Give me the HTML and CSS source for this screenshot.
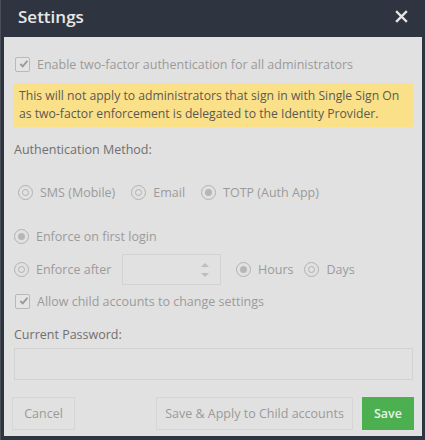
FILE: index.html
```
<!DOCTYPE html>
<html>
<head>
<meta charset="utf-8">
<link rel="stylesheet" href="styles.css">
</head>
<body>
<div class="modal">
  <div class="header">
    <span class="title">Settings</span>
    <span class="close">
      <svg width="13" height="13" viewBox="0 0 13 13"><path d="M2 2 L11 11 M11 2 L2 11" stroke="#e6e6e6" stroke-width="2.4" stroke-linecap="square"/></svg>
    </span>
  </div>
  <div class="body">
    <label class="check row-enable">
      <span class="cbox"><svg width="14" height="14" viewBox="0 0 14 14"><path d="M3 7 L6 10 L12 3" fill="none" stroke="#9a9a9a" stroke-width="2.4"/></svg></span>
      <span>Enable two-factor authentication for all administrators</span>
    </label>
    <div class="notice">This will not apply to administrators that sign in with Single Sign On as two-factor enforcement is delegated to the Identity Provider.</div>
    <div class="label auth-label">Authentication Method:</div>
    <div class="methods">
      <label class="radio"><span class="rad"></span>SMS (Mobile)</label>
      <label class="radio"><span class="rad"></span>Email</label>
      <label class="radio"><span class="rad on"></span>TOTP (Auth App)</label>
    </div>
    <label class="radio first"><span class="rad on"></span>Enforce on first login</label>
    <div class="after">
      <label class="radio"><span class="rad"></span>Enforce after</label>
      <div class="num">
        <svg width="10" height="18" viewBox="0 0 10 18"><path d="M1 6 L5 2 L9 6 Z M1 12 L5 16 L9 12 Z" fill="#bdbdbd"/></svg>
      </div>
      <label class="radio"><span class="rad on"></span>Hours</label>
      <label class="radio"><span class="rad"></span>Days</label>
    </div>
    <label class="check row-allow">
      <span class="cbox"><svg width="14" height="14" viewBox="0 0 14 14"><path d="M3 7 L6 10 L12 3" fill="none" stroke="#9a9a9a" stroke-width="2.4"/></svg></span>
      <span>Allow child accounts to change settings</span>
    </label>
    <div class="label pw-label">Current Password:</div>
    <div class="input"></div>
    <div class="footer">
      <button class="btn cancel">Cancel</button>
      <div class="spacer"></div>
      <button class="btn apply">Save &amp; Apply to Child accounts</button>
      <button class="btn save">Save</button>
    </div>
  </div>
</div>
</body>
</html>
```
FILE: styles.css
```
html, body {
  margin: 0;
  padding: 0;
  background: #2f3540;
}
body {
  width: 425px;
  height: 440px;
  overflow: hidden;
  font-family: "Open Sans", "Liberation Sans", sans-serif;
  font-size: 12.5px;
}
.modal {
  width: 425px;
  height: 440px;
  box-sizing: border-box;
  border-left: 1px solid #4a4f57;
  display: flex;
  flex-direction: column;
}
.header {
  height: 37px;
  display: flex;
  align-items: center;
  justify-content: space-between;
  padding: 0 17px 0 17px;
}
.title {
  color: #e8e8e8;
  font-size: 17px;
  font-weight: 600;
  margin-top: -4px;
}
.close {
  display: flex;
  margin-top: -5px;
}
.body {
  margin: 0 3px 0 3px;
  height: 399px;
  background: #e1e1e1;
  padding: 0 8px 0 10px;
  box-sizing: border-box;
  color: #9b9b9b;
  display: flex;
  flex-direction: column;
}
.check {
  display: flex;
  align-items: center;
  gap: 7px;
}
.cbox {
  width: 13px;
  height: 13px;
  border: 1px solid #b9b9b9;
  border-radius: 2px;
  background: #e4e4e4;
  display: flex;
  align-items: center;
  justify-content: center;
  margin-left: 1px;
}
.cbox svg { margin-left: 2px; margin-top: -1px; }
.row-enable { margin-top: 19px; }
.notice {
  margin-top: 10px;
  background: #fbe08a;
  color: #5a5a52;
  padding: 4px 4px 4px 5px;
  line-height: 18px;
  font-size: 12.2px;
  width: 399px;
  box-sizing: border-box;
}
.label { color: #707070; }
.auth-label { margin-top: 14px; }
.methods {
  display: flex;
  gap: 16px;
  margin-top: 26px;
  padding-left: 4px;
}
.radio {
  display: flex;
  align-items: center;
  gap: 7px;
}
.rad {
  width: 13px;
  height: 13px;
  border: 1.4px solid #b2b2b2;
  border-radius: 50%;
  display: flex;
  align-items: center;
  justify-content: center;
  box-sizing: content-box;
}
.rad::after {
  content: "";
  width: 5px;
  height: 5px;
  border-radius: 50%;
  border: 1.4px solid #b2b2b2;
}
.rad.on::after {
  width: 7px;
  height: 7px;
  border: none;
  background: #b6b6b6;
}
.first { margin-top: 27px; }
.after {
  display: flex;
  align-items: center;
  margin-top: 9px;
}
.after .radio:first-child { width: 108px; }
.num {
  width: 99px;
  height: 31px;
  border: 1px solid #d2d2d2;
  display: flex;
  align-items: center;
  justify-content: flex-end;
  padding-right: 10px;
  box-sizing: border-box;
  margin-right: 15px;
}
.after .num + .radio { margin-right: 11px; }
.row-allow { margin-top: 8px; }
.pw-label { margin-top: 16px; }
.input {
  margin-top: 5px;
  width: 399px;
  height: 32px;
  border: 1px solid #d2d2d2;
  box-sizing: border-box;
}
.footer {
  display: flex;
  margin-top: 17px;
  margin-left: -2px;
  align-items: center;
}
.spacer { flex: 1; }
.btn {
  font-family: "Open Sans", "Liberation Sans", sans-serif;
  font-size: 12.5px;
  height: 33px;
  border: 1px solid #d6d6d6;
  background: #e1e1e1;
  color: #9a9a9a;
  padding: 0;
}
.cancel { width: 63px; }
.apply { width: 197px; margin-right: 9px; }
.save {
  width: 52px;
  background: #4caf50;
  border-color: #4caf50;
  color: #e6f2e6;
  font-weight: 600;
  margin-right: 0;
}
```
